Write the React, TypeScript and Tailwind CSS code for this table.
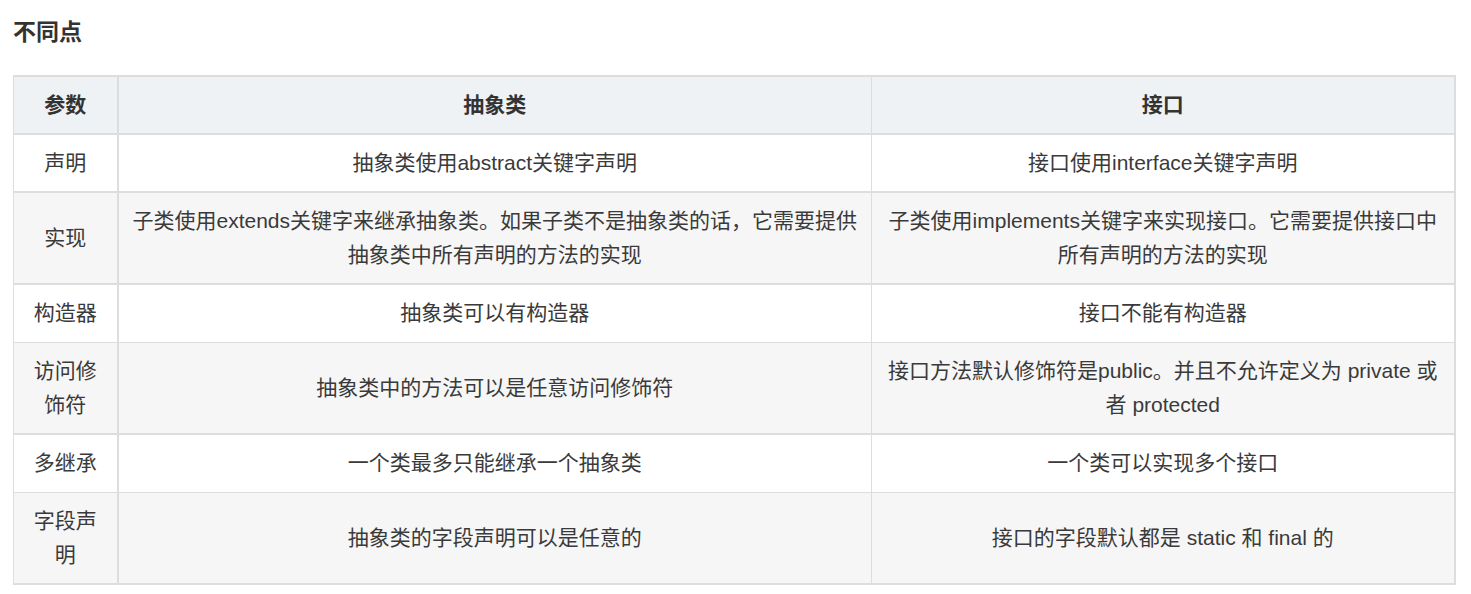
import React from "react";

const rows: { a: React.ReactNode; b: React.ReactNode; c: React.ReactNode; stripe: boolean; thick: boolean }[] = [
  { a: "声明", b: "抽象类使用abstract关键字声明", c: "接口使用interface关键字声明", stripe: false, thick: true },
  {
    a: "实现",
    b: (
      <>
        子类使用extends关键字来继承抽象类。如果子类不是抽象类的话，它需要提供
        <br />
        抽象类中所有声明的方法的实现
      </>
    ),
    c: (
      <>
        子类使用implements关键字来实现接口。它需要提供接口中
        <br />
        所有声明的方法的实现
      </>
    ),
    stripe: true,
    thick: true,
  },
  { a: "构造器", b: "抽象类可以有构造器", c: "接口不能有构造器", stripe: false, thick: false },
  {
    a: "访问修饰符",
    b: "抽象类中的方法可以是任意访问修饰符",
    c: (
      <>
        接口方法默认修饰符是public。并且不允许定义为 private 或
        <br />者 protected
      </>
    ),
    stripe: true,
    thick: true,
  },
  { a: "多继承", b: "一个类最多只能继承一个抽象类", c: "一个类可以实现多个接口", stripe: false, thick: false },
  { a: "字段声明", b: "抽象类的字段声明可以是任意的", c: "接口的字段默认都是 static 和 final 的", stripe: true, thick: true },
];

export default function App() {
  return (
    <div
      className="bg-white w-[1471px] h-[594px] overflow-hidden text-[#3a3a3a]"
      style={{ fontFamily: '"Liberation Sans", Arial, "Noto Sans CJK SC", sans-serif' }}
    >
      <div className="pl-[13px] pt-[16px]">
        <h3 className="text-[23px] leading-[32px] font-bold text-[#333]">不同点</h3>
      </div>
      <div className="pl-[13px] pt-[27px]">
        <table className="w-[1441px] border-collapse table-fixed text-[21px] leading-[34px] border-t-2 border-b-2 border-l border-r-2 border-[#dddddd]">
          <colgroup>
            <col className="w-[104px]" />
            <col className="w-[754px]" />
            <col className="w-[583px]" />
          </colgroup>
          <thead>
            <tr className="bg-[#eef2f5] border-b-2 border-[#dddddd]">
              <th className="py-[11px] px-[12px] font-bold text-[#333] text-center border-r-2 border-[#dddddd] align-middle">参数</th>
              <th className="py-[11px] px-[15px] font-bold text-[#333] text-center border-r border-[#dddddd] align-middle">抽象类</th>
              <th className="py-[11px] px-[15px] font-bold text-[#333] text-center align-middle">接口</th>
            </tr>
          </thead>
          <tbody>
            {rows.map((r, i) => {
              const pad = r.thick ? "py-[11px]" : "pt-[11px] pb-[12px]";
              return (
                <tr
                  key={i}
                  className={`${r.stripe ? "bg-[#f6f6f6]" : "bg-white"} ${
                    i < rows.length - 1 ? (r.thick ? "border-b-2" : "border-b") : ""
                  } border-[#dddddd]`}
                >
                  <td className={`${pad} px-[15px] text-center align-middle border-r-2 border-[#dddddd]`}>{r.a}</td>
                  <td className={`${pad} px-[12px] text-center align-middle border-r border-[#dddddd]`}>{r.b}</td>
                  <td className={`${pad} px-[12px] text-center align-middle`}>{r.c}</td>
                </tr>
              );
            })}
          </tbody>
        </table>
      </div>
    </div>
  );
}
